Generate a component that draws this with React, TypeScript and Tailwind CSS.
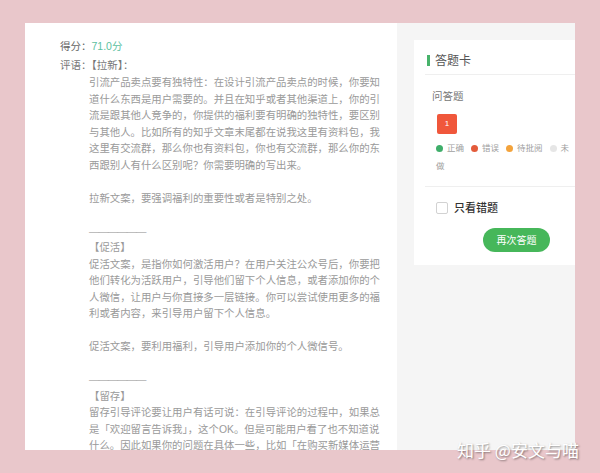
import { Fragment } from 'react';

const legend = [
  { label: '正确', dot: 'bg-[#3fae6a]' },
  { label: '错误', dot: 'bg-[#e35b3b]' },
  { label: '待批阅', dot: 'bg-[#f3a33c]' },
  { label: '未做', dot: 'bg-[#e6e6e6]' },
];

function Divider() {
  return <p className="mt-[16.5px] text-[#b0b0b0] font-['Liberation_Sans',sans-serif] tracking-[-1px]">——————</p>;
}

function AnswerCard() {
  return (
    <div className="w-[161px] h-[225px] bg-white">
      <div className="ml-[11px] pl-[2px] h-[35px] pt-[7px] flex items-center gap-[5px] border-b border-[#efefef]">
        <span className="w-[3px] h-[11px] bg-[#48b36b]" />
        <span className="text-[12px] leading-[14px] text-[#555]">答题卡</span>
      </div>

      <div className="ml-[11px] border-b border-[#efefef] pb-[11px]">
        <div className="pl-[7px] mt-[14px] text-[10.5px] leading-[14px] text-[#777]">问答题</div>
        <div className="ml-[12px] mt-[11px] w-[20px] h-[20px] rounded-[2px] bg-[#f0573b] flex items-center justify-center text-[8px] text-white">
          1
        </div>
        {/* legend wraps naturally: the last label breaks onto a second line */}
        <p className="ml-[11px] mt-[6px] w-[136px] text-[8.5px] leading-[17.5px] text-[#a0a0a0]">
          {legend.map((item, i) => (
            <Fragment key={item.label}>
              {i > 0 && <span className="inline-block w-[7px]" />}
              <span className={`inline-block w-[7px] h-[7px] rounded-full align-[-0.5px] mr-[4px] ${item.dot}`} />
              {item.label}
            </Fragment>
          ))}
        </p>
      </div>

      <div className="pl-[22px] mt-[14px] flex items-center gap-[6px]">
        <span className="w-[12px] h-[12px] rounded-[2px] border border-[#d2d2d2] bg-white" />
        <span className="text-[11px] leading-[14px] font-medium text-[#333]">只看错题</span>
      </div>

      <button
        type="button"
        className="ml-[69px] mt-[13px] w-[67px] h-[24px] rounded-full bg-[#46b75a] text-[10px] text-white"
      >
        再次答题
      </button>
    </div>
  );
}

export default function App() {
  return (
    <div className="relative w-[600px] h-[473px] overflow-hidden bg-[#e9c7cb] pl-[25px] pt-[23px] font-['Liberation_Sans','Noto_Sans_CJK_SC',sans-serif]">
      <div className="flex w-[550px] h-[427px]">
        <div className="w-[372px] shrink-0 overflow-hidden bg-white pl-[35px] pt-[14px] text-[10.5px]">
          <div className="leading-[19px] text-[#666]">
            得分：<span className="text-[#5cbfa0]">71.0分</span>
          </div>
          <div className="leading-[19px] text-[#777]">评语：【拉新】：</div>

          <div className="ml-[29px] w-[294px] leading-[16.5px] text-[10.4px] text-[#9a9a9a]">
            <p>
              引流产品卖点要有独特性：在设计引流产品卖点的时候，你要知道什么东西是用户需要的。并且在知乎或者其他渠道上，你的引流是跟其他人竞争的，你提供的福利要有明确的独特性，要区别与其他人。比如所有的知乎文章末尾都在说我这里有资料包，我这里有交流群，那么你也有资料包，你也有交流群，那么你的东西跟别人有什么区别呢？你需要明确的写出来。
            </p>
            <p className="mt-[16.5px]">拉新文案，要强调福利的重要性或者是特别之处。</p>

            <Divider />
            <p>【促活】</p>
            <p>
              促活文案，是指你如何激活用户？在用户关注公众号后，你要把他们转化为活跃用户，引导他们留下个人信息，或者添加你的个人微信，让用户与你直接多一层链接。你可以尝试使用更多的福利或者内容，来引导用户留下个人信息。
            </p>
            <p className="mt-[16.5px]">促活文案，要利用福利，引导用户添加你的个人微信号。</p>

            <Divider />
            <p>【留存】</p>
            <p>
              留存引导评论要让用户有话可说：在引导评论的过程中，如果总是「欢迎留言告诉我」，这个OK。但是可能用户看了也不知道说什么。因此如果你的问题在具体一些，比如「在购买新媒体运营课程时，你最关心的是什么？」
            </p>
          </div>
        </div>

        <div className="flex-1 overflow-hidden bg-[#f5f5f5] pl-[17px] pt-[17px]">
          <AnswerCard />
        </div>
      </div>

      <div className="absolute left-[457px] top-[440px] text-[17px] leading-[20px] text-white [text-shadow:1px_1px_2px_rgba(0,0,0,0.45)] font-['Noto_Sans_CJK_SC',sans-serif]">
        知乎 @安文与喵
      </div>
    </div>
  );
}
